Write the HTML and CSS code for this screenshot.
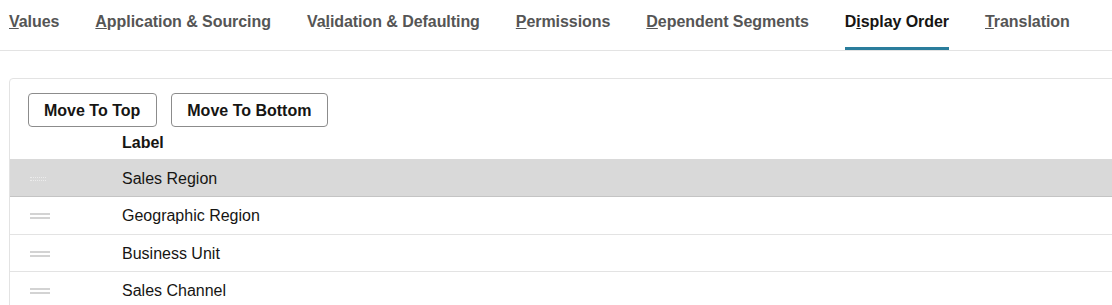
FILE: index.html
```html
<!DOCTYPE html>
<html>
<head>
<meta charset="utf-8">
<link rel="stylesheet" href="styles.css">
</head>
<body>
<nav class="tabs">
  <a class="tab"><u>V</u>alues</a>
  <a class="tab"><u>A</u>pplication &amp; Sourcing</a>
  <a class="tab">Va<u>l</u>idation &amp; Defaulting</a>
  <a class="tab"><u>P</u>ermissions</a>
  <a class="tab"><u>D</u>ependent Segments</a>
  <a class="tab active">D<u>i</u>splay Order</a>
  <a class="tab"><u>T</u>ranslation</a>
</nav>
<section class="panel">
  <div class="toolbar">
    <button class="btn">Move To Top</button>
    <button class="btn">Move To Bottom</button>
  </div>
  <div class="head">
    <span class="handle-col"></span>
    <span class="label-col">Label</span>
  </div>
  <div class="row selected">
    <span class="handle-col"><span class="handle faint"></span></span>
    <span class="label-col">Sales Region</span>
  </div>
  <div class="row">
    <span class="handle-col"><span class="handle"></span></span>
    <span class="label-col">Geographic Region</span>
  </div>
  <div class="row">
    <span class="handle-col"><span class="handle"></span></span>
    <span class="label-col">Business Unit</span>
  </div>
  <div class="row">
    <span class="handle-col"><span class="handle"></span></span>
    <span class="label-col">Sales Channel</span>
  </div>
</section>
</body>
</html>
```

FILE: styles.css
```css
html, body {
  margin: 0;
  padding: 0;
  overflow: hidden;
  background: #fff;
}
body {
  font-family: "Liberation Sans", Arial, sans-serif;
  font-size: 16px;
  color: #161513;
}
.tabs {
  display: flex;
  gap: 36px;
  padding: 0 0 0 9px;
  height: 50px;
  border-bottom: 1px solid #e3e3e3;
}
.tab {
  display: block;
  padding-top: 13px;
  height: 34px;
  line-height: 18px;
  font-weight: bold;
  letter-spacing: -0.06px;
  color: #555;
  border-bottom: 3px solid transparent;
  white-space: nowrap;
}
.tab.active {
  color: #161513;
  border-bottom-color: #2a7d9c;
}
.panel {
  margin: 27px -20px 0 9px;
  border: 1px solid #e3e3e3;
  border-radius: 4px 0 0 0;
}
.toolbar {
  display: flex;
  gap: 14px;
  padding: 14px 0 0 18px;
}
.btn {
  font-family: "Liberation Sans", Arial, sans-serif;
  font-size: 16px;
  font-weight: bold;
  color: #161513;
  background: #fff;
  border: 1px solid #8c8c8c;
  border-radius: 4px;
  height: 34px;
  padding: 1px 16px 0 15px;
  cursor: pointer;
}
.head, .row {
  display: flex;
  align-items: center;
}
.head {
  height: 32px;
  font-weight: bold;
}
.row {
  height: 36.5px;
  border-top: 1px solid #e3e3e3;
}
.row.selected {
  background: #d9d9d9;
  border-top: none;
  height: 37px;
  border-bottom: 1px solid #c4c4c4;
}
.row.selected + .row {
  border-top: none;
}
.handle-col {
  width: 112px;
  display: flex;
  align-items: center;
  padding-left: 20px;
  box-sizing: border-box;
}
.handle {
  display: block;
  width: 20px;
  height: 2px;
  border-top: 2px solid #d3d3d3;
  border-bottom: 2px solid #d3d3d3;
  margin-top: 2px;
}
.handle.faint {
  border-top: 1px dotted #ececec;
  border-bottom: 1px dotted #ececec;
  width: 16px;
  margin-left: 0;
}
.row .label-col {
  padding-top: 2px;
}
.label-col {
  white-space: nowrap;
}
```
